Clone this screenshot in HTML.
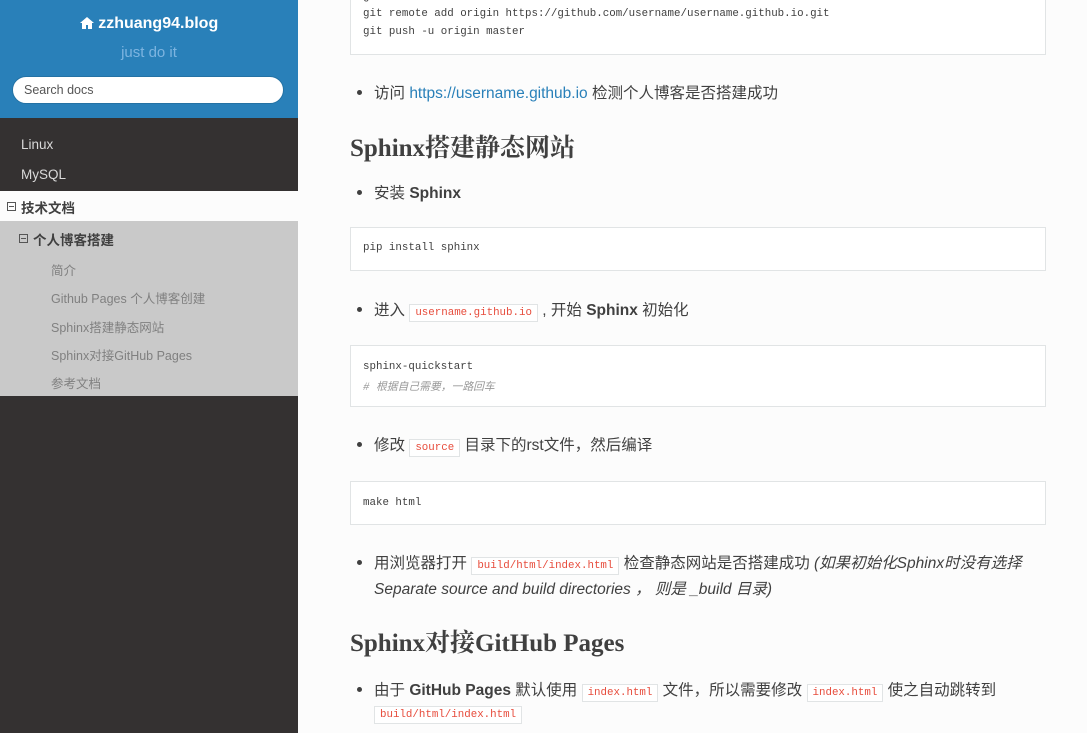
<!DOCTYPE html>
<html><head><meta charset="utf-8"><style>
*{margin:0;padding:0;box-sizing:border-box}
body{width:1087px;height:733px;overflow:hidden;background:#fcfcfc;font-family:"Liberation Sans","Noto Sans CJK SC",sans-serif;color:#404040;position:relative}
.side{position:absolute;left:0;top:0;width:298px;height:733px;background:#343131}
.top{position:absolute;left:0;top:0;width:298px;height:118px;background:#2980b9;text-align:center}
.title{position:absolute;top:15px;width:100%;color:#fff;font-weight:bold;font-size:16px}
.sub{position:absolute;top:44px;width:100%;color:#7db4e0;font-size:15px}
.search{position:absolute;left:12px;top:76px;width:272px;height:28px;background:#fff;border-radius:14px;border:1px solid #2472a4;font-size:12.5px;color:#555;text-align:left;padding:6px 11px}
.it{position:absolute;left:21px;font-size:13.5px;color:#d9d9d9}
.l1{position:absolute;left:0;top:191px;width:298px;height:30px;background:#fcfcfc;font-weight:bold;font-size:13.5px;color:#404040;padding:6px 0 0 21px}
.l2{position:absolute;left:0;top:221px;width:298px;height:175px;background:#c9c9c9}
.l2 .h{position:absolute;left:33px;top:8px;font-weight:bold;font-size:13.5px;color:#404040}
.l2 .s{position:absolute;left:51px;font-size:12.5px;color:#808080}
.tog{position:absolute;width:9px;height:9px;border:1px solid #555;font-size:0}
.tog:after{content:"";position:absolute;left:1px;top:3px;width:5px;height:1px;background:#555}
.code{position:absolute;left:350px;width:696px;background:#fff;border:1px solid #e1e4e5;font-family:"Liberation Mono","Noto Sans CJK SC",monospace;font-size:10.8px;color:#404040;padding:0 12px}
.code div{position:absolute;left:12px;white-space:nowrap}
.p{position:absolute;left:374px;font-size:15.5px;white-space:nowrap}
.p:before{content:"";position:absolute;left:-17px;top:9px;width:5px;height:5px;border-radius:50%;background:#404040}
.p.nb:before{display:none}
.lit{font-family:"Liberation Mono",monospace;font-size:10.8px;color:#e74c3c;background:#fff;border:1px solid #e1e4e5;padding:2px 5px}
a{color:#2980b9;text-decoration:none}
h2{position:absolute;left:350px;font-family:"Liberation Serif","Noto Serif CJK SC",serif;font-weight:bold;font-size:25px;color:#404040;white-space:nowrap}
</style></head><body>
<div class="side">
<div class="top">
<div class="title"><svg width="14" height="12" viewBox="0 0 14 12" style="vertical-align:-1px"><path d="M7 0L0 6h2v6h4V8h2v4h4V6h2z" fill="#fff"/></svg> zzhuang94.blog</div>
<div class="sub">just do it</div>
<div class="search">Search docs</div>
</div>
<div class="it" style="top:137px">Linux</div>
<div class="it" style="top:167px">MySQL</div>
<div class="l1"><span class="tog" style="left:7px;top:11px"></span>技术文档</div>
<div class="l2">
<span class="tog" style="left:19px;top:13px"></span>
<div class="h">个人博客搭建</div>
<div class="s" style="top:39px">简介</div>
<div class="s" style="top:67px">Github Pages 个人博客创建</div>
<div class="s" style="top:96px">Sphinx搭建静态网站</div>
<div class="s" style="top:124px">Sphinx对接GitHub Pages</div>
<div class="s" style="top:152px">参考文档</div>
</div>
</div>

<div class="code" style="top:-10px;height:65px">
<div style="top:0px">git commit -m "first commit"</div>
<div style="top:17px">git remote add origin https://github.com/username/username.github.io.git</div>
<div style="top:35px">git push -u origin master</div>
</div>
<div class="p" style="top:81px">访问 <a>https://username.github.io</a> 检测个人博客是否搭建成功</div>
<h2 style="top:128px">Sphinx搭建静态网站</h2>
<div class="p" style="top:181px">安装 <b>Sphinx</b></div>
<div class="code" style="top:227px;height:44px"><div style="top:14px">pip install sphinx</div></div>
<div class="p" style="top:298px">进入 <span class="lit">username.github.io</span> , 开始 <b>Sphinx</b> 初始化</div>
<div class="code" style="top:345px;height:62px">
<div style="top:15px">sphinx-quickstart</div>
<div style="top:32px;color:#999;font-style:italic"># 根据自己需要，一路回车</div>
</div>
<div class="p" style="top:433px">修改 <span class="lit">source</span> 目录下的rst文件，然后编译</div>
<div class="code" style="top:481px;height:44px"><div style="top:15px">make html</div></div>
<div class="p" style="top:551px">用浏览器打开 <span class="lit">build/html/index.html</span> 检查静态网站是否搭建成功 <i>(如果初始化Sphinx时没有选择</i></div>
<div class="p nb" style="top:577px"><i>Separate source and build directories ， 则是 _build 目录)</i></div>
<h2 style="top:623px">Sphinx对接GitHub Pages</h2>
<div class="p" style="top:678px">由于 <b>GitHub Pages</b> 默认使用 <span class="lit">index.html</span> 文件，所以需要修改 <span class="lit">index.html</span> 使之自动跳转到</div>
<div class="p nb" style="top:704px"><span class="lit">build/html/index.html</span></div>
</body></html>
